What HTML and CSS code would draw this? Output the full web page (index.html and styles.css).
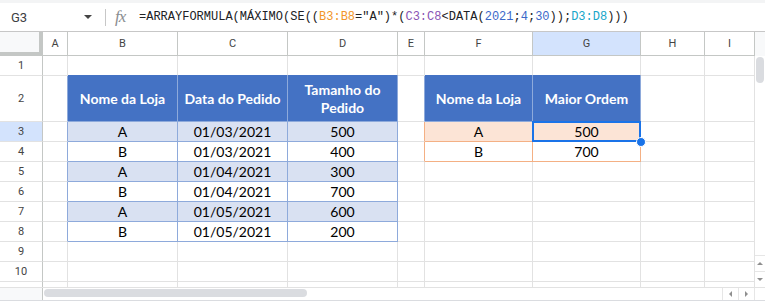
FILE: index.html
```html
<!DOCTYPE html>
<html lang="pt">
<head>
    <meta charset="UTF-8">
    <title>Planilha - Maior Ordem</title>
    <link rel="stylesheet" href="styles.css">
</head>
<body>
    <div class="topbar"></div>

    <!-- Formula bar -->
    <div class="fbar">
        <div class="namebox">G3</div>
        <svg class="dd" width="8" height="4" viewBox="0 0 8 4"><path d="M0 0h8L4 4z" fill="#444"/></svg>
        <div class="sep"></div>
        <span class="fx">fx</span>
        <div class="formula">=ARRAYFORMULA(MÁXIMO(SE((<span class="r1">B3:B8</span>="A")*(<span class="r2">C3:C8</span>&lt;DATA(<span class="num">2021</span>;<span class="num">4</span>;<span class="num">30</span>));<span class="r3">D3:D8</span>)))</div>
    </div>

    <div class="main">
        <div class="grid">
            <!-- column headers -->
            <div class="corner"></div>
            <div class="c ch">A</div>
            <div class="c ch">B</div>
            <div class="c ch">C</div>
            <div class="c ch">D</div>
            <div class="c ch">E</div>
            <div class="c ch">F</div>
            <div class="c ch sel">G</div>
            <div class="c ch">H</div>
            <div class="c ch">I</div>

            <!-- row 1 -->
            <div class="c rh">1</div>
            <div class="c"></div>
            <div class="c bt"></div>
            <div class="c bt"></div>
            <div class="c bt"></div>
            <div class="c"></div>
            <div class="c bt"></div>
            <div class="c bt"></div>
            <div class="c"></div>
            <div class="c"></div>

            <!-- row 2 -->
            <div class="c rh">2</div>
            <div class="c bl"></div>
            <div class="c hd">Nome da Loja</div>
            <div class="c hd">Data do Pedido</div>
            <div class="c hd">Tamanho do Pedido</div>
            <div class="c bl"></div>
            <div class="c hd">Nome da Loja</div>
            <div class="c hd">Maior Ordem</div>
            <div class="c"></div>
            <div class="c"></div>

            <!-- row 3 -->
            <div class="c rh sel">3</div>
            <div class="c bl"></div>
            <div class="c tb band">A</div>
            <div class="c tb band">01/03/2021</div>
            <div class="c tb band">500</div>
            <div class="c eo"></div>
            <div class="c ob peach">A</div>
            <div class="c ob peach active">500</div>
            <div class="c"></div>
            <div class="c"></div>

            <!-- row 4 -->
            <div class="c rh">4</div>
            <div class="c bl"></div>
            <div class="c tb">B</div>
            <div class="c tb">01/03/2021</div>
            <div class="c tb">400</div>
            <div class="c eo"></div>
            <div class="c ob">B</div>
            <div class="c ob">700</div>
            <div class="c"></div>
            <div class="c"></div>

            <!-- row 5 -->
            <div class="c rh">5</div>
            <div class="c bl"></div>
            <div class="c tb band">A</div>
            <div class="c tb band">01/04/2021</div>
            <div class="c tb band">300</div>
            <div class="c"></div>
            <div class="c"></div>
            <div class="c"></div>
            <div class="c"></div>
            <div class="c"></div>

            <!-- row 6 -->
            <div class="c rh">6</div>
            <div class="c bl"></div>
            <div class="c tb">B</div>
            <div class="c tb">01/04/2021</div>
            <div class="c tb">700</div>
            <div class="c"></div>
            <div class="c"></div>
            <div class="c"></div>
            <div class="c"></div>
            <div class="c"></div>

            <!-- row 7 -->
            <div class="c rh">7</div>
            <div class="c bl"></div>
            <div class="c tb band">A</div>
            <div class="c tb band">01/05/2021</div>
            <div class="c tb band">600</div>
            <div class="c"></div>
            <div class="c"></div>
            <div class="c"></div>
            <div class="c"></div>
            <div class="c"></div>

            <!-- row 8 -->
            <div class="c rh">8</div>
            <div class="c bl"></div>
            <div class="c tb">B</div>
            <div class="c tb">01/05/2021</div>
            <div class="c tb">200</div>
            <div class="c"></div>
            <div class="c"></div>
            <div class="c"></div>
            <div class="c"></div>
            <div class="c"></div>

            <!-- row 9 -->
            <div class="c rh">9</div>
            <div class="c"></div>
            <div class="c"></div>
            <div class="c"></div>
            <div class="c"></div>
            <div class="c"></div>
            <div class="c"></div>
            <div class="c"></div>
            <div class="c"></div>
            <div class="c"></div>

            <!-- row 10 -->
            <div class="c rh">10</div>
            <div class="c"></div>
            <div class="c"></div>
            <div class="c"></div>
            <div class="c"></div>
            <div class="c"></div>
            <div class="c"></div>
            <div class="c"></div>
            <div class="c"></div>
            <div class="c"></div>

            <!-- row 11 (cut off) -->
            <div class="c rh cut"></div>
            <div class="c cut"></div>
            <div class="c cut"></div>
            <div class="c cut"></div>
            <div class="c cut"></div>
            <div class="c cut"></div>
            <div class="c cut"></div>
            <div class="c cut"></div>
            <div class="c cut"></div>
            <div class="c cut"></div>
        </div>

        <!-- vertical scrollbar -->
        <div class="vscroll">
            <div class="vs-head"></div>
            <div class="vs-track"><div class="vs-thumb"></div></div>
            <div class="sbtn"><svg width="6" height="3" viewBox="0 0 6 3"><path d="M0 3h6L3 0z" fill="#8f8f8f"/></svg></div>
            <div class="sbtn"><svg width="6" height="3" viewBox="0 0 6 3"><path d="M0 0h6L3 3z" fill="#8f8f8f"/></svg></div>
        </div>
    </div>

    <!-- horizontal scrollbar -->
    <div class="hscroll">
        <div class="hs-left"></div>
        <div class="hs-track"><div class="hs-thumb"></div></div>
        <div class="hbtn"><svg width="3" height="6" viewBox="0 0 3 6"><path d="M3 0v6L0 3z" fill="#8f8f8f"/></svg></div>
        <div class="hbtn"><svg width="3" height="6" viewBox="0 0 3 6"><path d="M0 0v6L3 3z" fill="#8f8f8f"/></svg></div>
        <div class="hs-corner"></div>
    </div>
</body>
</html>
```

FILE: styles.css
```css
body {
    margin: 0;
    width: 765px;
    height: 301px;
    overflow: hidden;
    background: #fff;
    font-family: 'Roboto', 'Liberation Sans', sans-serif;
    color: #444;
}

.topbar {
    height: 3px;
    background: #f3f4f5;
}

/* formula bar */
.fbar {
    display: flex;
    align-items: center;
    height: 28px;
    border-bottom: 1px solid #c7c7c7;
}

.namebox {
    width: 84px;
    box-sizing: border-box;
    padding-left: 11px;
    font-size: 13px;
    color: #3c4043;
}

.dd {
    display: block;
}

.sep {
    width: 1px;
    height: 17px;
    margin-left: 13px;
    background: #c7c7c7;
}

.fx {
    width: 15px;
    margin-left: 9px;
    font-family: 'Liberation Serif', serif;
    font-style: italic;
    font-size: 17px;
    color: #8a8d91;
    letter-spacing: -1px;
}

.formula {
    margin-left: 9px;
    font-family: 'Liberation Mono', monospace;
    font-size: 12px;
    color: #202124;
    white-space: nowrap;
}

.r1 { color: #f2962a; }
.r2 { color: #8a55b5; }
.r3 { color: #16a6c9; }
.num { color: #3b68c9; }

/* sheet */
.main {
    display: flex;
}

.grid {
    display: grid;
    grid-template-columns: 43px 25px 110px 110px 110px 27px 108px 108px 64px 50px;
    grid-template-rows: 24px 20px 46px repeat(8, 20px) 5px;
}

.c {
    box-sizing: border-box;
    border-right: 1px solid #e2e2e2;
    border-bottom: 1px solid #e2e2e2;
    display: flex;
    align-items: center;
    justify-content: center;
    text-align: center;
    font-family: 'Lato', sans-serif;
    font-size: 14px;
    color: #000;
}

.corner {
    box-sizing: border-box;
    background: #f8f9fa;
    border-right: 4px solid #c4c7c5;
    border-bottom: 4px solid #c4c7c5;
}

.ch {
    font-family: 'Roboto', sans-serif;
    font-size: 11px;
    color: #444;
    border-right-color: #c4c7c5;
    border-bottom-color: #c4c7c5;
}

.rh {
    font-family: 'Roboto', sans-serif;
    font-size: 11px;
    color: #444;
    border-right-color: #c4c7c5;
}

.ch.sel,
.rh.sel {
    background: #d3e3fd;
}

.cut {
    border-bottom: none;
}

.bt {
    border-bottom-color: #4472c4;
}

.bl {
    border-right-color: #8eaadb;
}

.eo {
    border-right-color: #f4b084;
}

.hd {
    background: #4472c4;
    color: #fff;
    font-weight: bold;
    line-height: 18px;
    padding: 0 2px;
    border-right-color: #8eaadb;
    border-bottom-color: #8eaadb;
}

.tb {
    border-right-color: #8eaadb;
    border-bottom-color: #8eaadb;
}

.band {
    background: #d9e1f2;
}

.ob {
    border-right-color: #f4b084;
    border-bottom-color: #f4b084;
}

.peach {
    background: #fce4d6;
}

/* selected cell */
.active {
    position: relative;
    z-index: 2;
}

.active::before {
    content: "";
    position: absolute;
    inset: -1px;
    border: 2px solid #1a73e8;
}

.active::after {
    content: "";
    position: absolute;
    right: -6px;
    bottom: -6px;
    width: 8px;
    height: 8px;
    border-radius: 50%;
    background: #1a73e8;
    border: 1px solid #fff;
}

/* scrollbars */
.vscroll {
    width: 10px;
    display: flex;
    flex-direction: column;
}

.vs-head {
    height: 24px;
    background: #f8f9fa;
}

.vs-track {
    flex: 1;
    padding: 1px 1px 0 1px;
}

.vs-thumb {
    height: 26px;
    border-radius: 4px;
    background: #dadce0;
}

.sbtn {
    height: 16px;
    box-sizing: border-box;
    border-top: 1px solid #e6e6e6;
    display: flex;
    align-items: center;
    justify-content: center;
}

.hscroll {
    display: flex;
    height: 14px;
    box-sizing: border-box;
    border-top: 1px solid #e2e2e2;
    border-bottom: 1px solid #dadce0;
}

.hs-left {
    width: 43px;
    box-sizing: border-box;
    background: #f8f9fa;
    border-right: 1px solid #c4c7c5;
}

.hs-track {
    width: 680px;
    padding: 1px 0 0 1px;
    box-sizing: border-box;
}

.hs-thumb {
    width: 263px;
    height: 8px;
    border-radius: 4px;
    background: #dadce0;
}

.hbtn {
    width: 16px;
    box-sizing: border-box;
    border-left: 1px solid #e6e6e6;
    display: flex;
    align-items: center;
    justify-content: center;
}

.hs-corner {
    width: 10px;
    border-left: 1px solid #e6e6e6;
}
```
